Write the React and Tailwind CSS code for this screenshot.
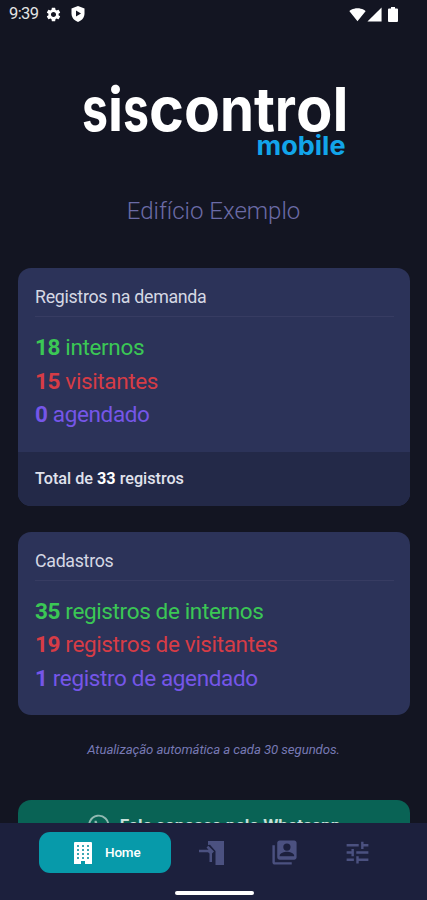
import React from 'react';
import {
    MdSettings,
    MdSignalWifi4Bar,
    MdSignalCellular4Bar,
    MdTune,
} from 'react-icons/md';

const demand = [
    { value: 18, label: 'internos', color: 'text-[#3bc755]' },
    { value: 15, label: 'visitantes', color: 'text-[#d63c46]' },
    { value: 0, label: 'agendado', color: 'text-[#7556e8]' },
];

const records = [
    { value: 35, label: 'registros de internos', color: 'text-[#3bc755]' },
    { value: 19, label: 'registros de visitantes', color: 'text-[#d63c46]' },
    { value: 1, label: 'registro de agendado', color: 'text-[#7556e8]' },
];

// letter, x position, advance width
const wordmark = [
    ['s', 3, 26],
    ['i', 29, 15],
    ['s', 44, 26],
    ['c', 70, 35],
    ['o', 105, 36],
    ['n', 141, 34],
    ['t', 175, 21],
    ['r', 196, 21],
    ['o', 217, 36.5],
    ['l', 253.500, 16],
];

const StatusBar = () => (
    <div className="h-7 shrink-0 pl-[9px] pr-[29px] flex justify-between items-center text-white">
        <div className="flex items-center">
            <span className="w-[30px] pt-px text-[16.500px] tracking-[-0.600px] text-[#e4e4e4]">9:39</span>
            <MdSettings className="w-[17px] h-[17px] ml-[6px]" />
            <svg viewBox="0 0 16 18" className="w-[16px] h-[18px] ml-[8px]">
                <path d="M8 1l6.500 2.500v5c0 4-2.600 7-6.500 8.500C4.100 15.500 1.500 12.500 1.500 8.500v-5z" fill="currentColor" />
                <path d="M6 5.500l5 3-5 3z" fill="#131522" />
            </svg>
        </div>
        <div className="flex items-center">
            <MdSignalWifi4Bar className="w-[17px] h-[17px]" />
            <MdSignalCellular4Bar className="w-[17px] h-[17px]" />
            <svg viewBox="0 0 10 15" className="w-[10px] h-[15px] ml-[5px]" fill="currentColor">
                <path d="M3 0h4v1.500h2q1 0 1 1V14q0 1-1 1H1q-1 0-1-1V2.500q0-1 1-1h2z" />
            </svg>
        </div>
    </div>
);

const Logo = () => (
    <svg viewBox="0 0 270 80" className="w-[270px] h-[80px] overflow-visible" fontFamily="Inter, 'Liberation Sans', sans-serif" fontWeight="700">
        <text y="50" fontSize="61" fill="#fff">
            {wordmark.map(([letter, x, width], i) => (
                <tspan key={i} x={x} textLength={width} lengthAdjust="spacingAndGlyphs">{letter}</tspan>
            ))}
        </text>
        <text x="177.500" y="74" fontSize="26" fill="#12a5ea" textLength="89" lengthAdjust="spacingAndGlyphs">mobile</text>
    </svg>
);

const StatCard = ({ title, items, children }) => (
    <div className="rounded-[13px] overflow-hidden bg-[#2c3359]">
        <div className="pl-[17.500px] pr-[16px] pt-[16px]">
            <div className="h-[33px] border-b border-[#373c62] text-[17.800px] tracking-[-0.300px] leading-[25px] text-[#d5d8e4]">{title}</div>
            <div className="pt-[14px] pb-[20px]">
                {items.map((item) => (
                    <div key={item.label} className={`h-[33.500px] text-[22.500px] tracking-[-0.360px] leading-[33.500px] ${item.color}`}>
                        <span className="font-bold">{item.value}</span> {item.label}
                    </div>
                ))}
            </div>
        </div>
        {children}
    </div>
);

const DoorIcon = () => (
    <svg viewBox="0 0 26 26" className="w-[26px] h-[26px]" fill="currentColor">
        <path d="M9 1h16v24h-8.500V11L11 4.800 9 5z" />
        <path d="M0 9.800h9.500L7.500 7.500l1.800-1.700 5.700 5.700-2 2V22h-2.500v-8.500L9 12.300H0z" />
    </svg>
);

const BuildingIcon = () => (
    <svg viewBox="0 0 18 22" className="w-[18px] h-[22px]">
        <path d="M1 0h16q1 0 1 1v21h-7v-3H7v3H0V1q0-1 1-1z" fill="#fff" />
        <path d="M3 3h2v2H3zM8 3h2v2H8zM13 3h2v2h-2zM3 7h2v2H3zM8 7h2v2H8zM13 7h2v2h-2zM3 11h2v2H3zM8 11h2v2H8zM13 11h2v2h-2zM3 15h2v2H3zM8 15h2v2H8zM13 15h2v2h-2z" fill="#3ba6b3" />
    </svg>
);

const AccountsIcon = () => (
    <svg viewBox="0 0 24 24" className="w-[29px] h-[29px]" fill="currentColor">
        <path d="M4 6H2v14c0 1.100.9 2 2 2h14v-2H4z" />
        <path fillRule="evenodd" d="M20 2H8c-1.100 0-2 .9-2 2v12c0 1.100.9 2 2 2h12c1.100 0 2-.9 2-2V4c0-1.100-.9-2-2-2zm-6 2.500a3 3 0 1 1 0 6 3 3 0 0 1 0-6zm6 10.500H8v-.5c0-2 4-3.100 6-3.100s6 1.100 6 3.100z" />
    </svg>
);

const BottomNav = () => (
    <nav className="h-[77px] shrink-0 bg-[#1c203d] pt-[9px] flex flex-col">
        <div className="flex items-center text-[#4b5180]">
            <button className="ml-[39px] w-[132px] h-[41px] rounded-[11px] bg-[#079aaa] flex items-center pl-[35px] text-white">
                <BuildingIcon />
                <span className="ml-[13px] text-[13.500px] tracking-[-0.200px] font-medium">Home</span>
            </button>
            <div className="w-[40px] ml-[21px] flex justify-center"><DoorIcon /></div>
            <div className="w-[40px] ml-[32px] flex justify-center"><AccountsIcon /></div>
            <div className="w-[40px] ml-[33px] flex justify-center"><MdTune className="w-[29px] h-[29px]" /></div>
        </div>
        <div className="mt-[18px] ml-[175px] w-[79px] h-[4px] rounded-full bg-white" />
    </nav>
);

const App = () => (
    <div className="w-full h-[900px] flex flex-col overflow-hidden bg-[#131522] font-[Roboto,sans-serif]">
        <StatusBar />
        <main className="flex-1 min-h-0 overflow-hidden flex flex-col px-[17.500px]">
            <div className="shrink-0 pt-[53px] flex justify-center">
                <Logo />
            </div>
            <h1 className="shrink-0 mt-[34px] h-[32px] leading-[32px] text-center text-[24px] font-light text-[#6b6ba6]">Edifício Exemplo</h1>
            <div className="shrink-0 mt-[41px] flex flex-col gap-[26px]">
                <StatCard title="Registros na demanda" items={demand}>
                    <div className="h-[54px] pl-[17.500px] pt-[2px] bg-[#232948] flex items-center text-[16.200px] font-medium text-[#e0e2ed]">
                        <span>Total de <b className="text-white">33</b> registros</span>
                    </div>
                </StatCard>
                <StatCard title="Cadastros" items={records} />
            </div>
            <p className="shrink-0 mt-[25px] h-[20px] leading-[20px] text-center text-[13.200px] tracking-[-0.080px] italic text-[#7779b4]">
                Atualização automática a cada 30 segundos.
            </p>
            <button className="shrink-0 mt-[40px] h-[51px] rounded-[13px] bg-[#096355] flex justify-center items-center text-white">
                <svg viewBox="0 0 24 24" className="w-[23px] h-[23px] mr-[10px] text-[#91b9b2]" fill="none" stroke="currentColor" strokeWidth="2">
                    <path d="M2 22l1.500-5.500A10 10 0 1 1 7.500 20.500z" />
                    <path d="M8 7c-1 4 4 9 8 9l1-2-3-1-1 1-3-3 1-1-1-3z" fill="currentColor" stroke="none" />
                </svg>
                <span className="text-[17.200px] font-bold text-[#c8e0da]">Fale conosco pelo Whatsapp</span>
            </button>
        </main>
        <BottomNav />
    </div>
);

export default App;
